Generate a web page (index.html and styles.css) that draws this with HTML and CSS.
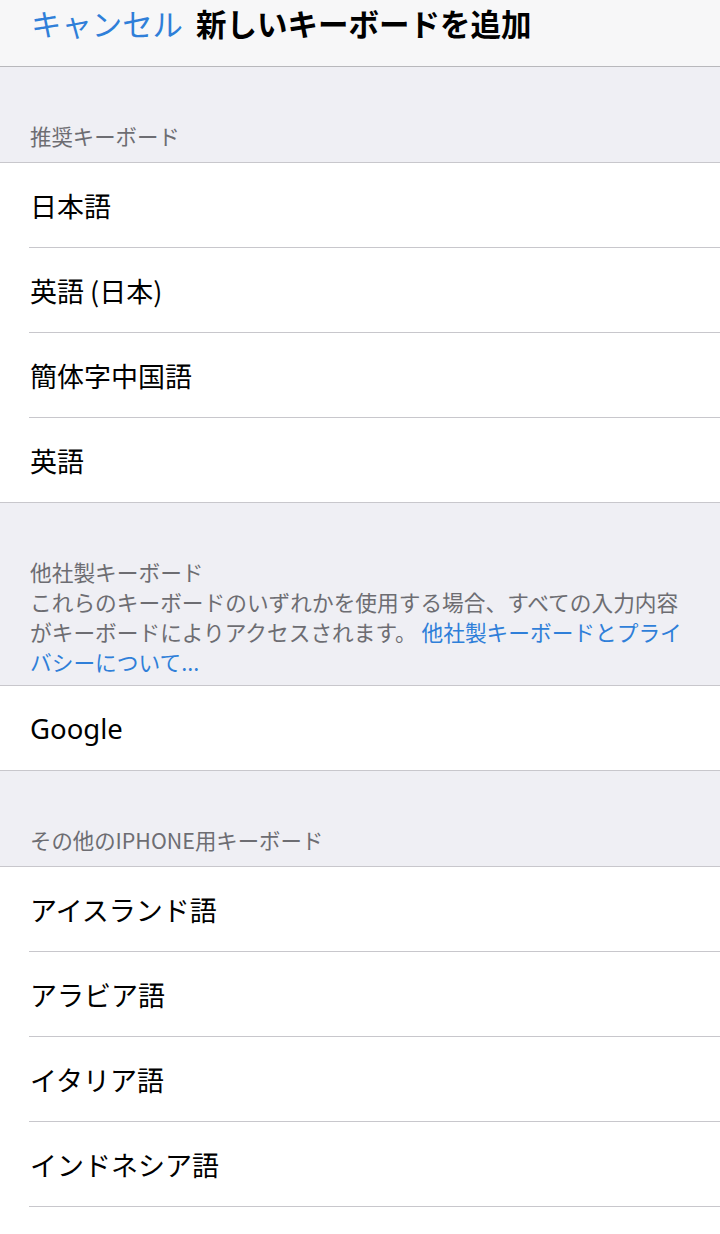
FILE: index.html
```html
<!DOCTYPE html>
<html lang="ja">
<head>
<meta charset="utf-8">
<link rel="stylesheet" href="styles.css">
</head>
<body>
<div class="screen">
  <header class="nav">
    <span class="cancel">キャンセル</span>
    <span class="title">新しいキーボードを追加</span>
  </header>

  <div class="section-head">推奨キーボード</div>
  <ul class="group">
    <li class="row">日本語</li>
    <li class="row">英語 (日本)</li>
    <li class="row">簡体字中国語</li>
    <li class="row">英語</li>
  </ul>

  <div class="section-head multi">他社製キーボード<br>これらのキーボードのいずれかを使用する場合、すべての入力内容がキーボードによりアクセスされます。 <span class="link">他社製キーボードとプライバシーについて...</span></div>
  <ul class="group">
    <li class="row latin">Google</li>
  </ul>

  <div class="section-head">その他のIPHONE用キーボード</div>
  <ul class="group open">
    <li class="row">アイスランド語</li>
    <li class="row">アラビア語</li>
    <li class="row">イタリア語</li>
    <li class="row">インドネシア語</li>
  </ul>
</div>
</body>
</html>
```

FILE: styles.css
```css
html, body {
  margin: 0;
  padding: 0;
  background: #efeff4;
}
body {
  font-family: "Noto Sans CJK JP", "Noto Sans", sans-serif;
  width: 720px;
  height: 1234px;
  overflow: hidden;
}
.screen {
  display: flex;
  flex-direction: column;
  height: 1234px;
}
.nav {
  height: 67px;
  flex: none;
  box-sizing: border-box;
  padding: 6px 0 0 31px;
  background: #f7f7f8;
  border-bottom: 1px solid #b8b8bc;
  display: flex;
  align-items: flex-start;
  gap: 13px;
  line-height: 34px;
  font-size: 30.4px;
}
.cancel {
  color: #2f7fd9;
}
.title {
  color: #000;
  font-weight: 700;
  font-size: 30.5px;
}
.section-head {
  padding: 54px 20px 11px 30px;
  font-size: 21.4px;
  line-height: 30px;
  color: #6d6d72;
}
.section-head.multi {
  padding-bottom: 8px;
  font-size: 21.7px;
  padding-right: 24px;
}
.link {
  color: #2f7fd9;
}
.group {
  list-style: none;
  margin: 0;
  padding: 0 0 0 29px;
  background: #fff;
  border-top: 1px solid #c8c7cc;
  border-bottom: 1px solid #c8c7cc;
}
.group.open {
  border-bottom: none;
  flex: 1;
}
.row {
  height: 84px;
  display: flex;
  align-items: center;
  padding-left: 1px;
  font-size: 27px;
  color: #000;
  border-bottom: 1px solid #c8c7cc;
}
.row:last-child {
  border-bottom: none;
}
.group.open .row:last-child {
  border-bottom: 1px solid #c8c7cc;
}
.row.latin {
  font-family: "Noto Sans", "Roboto", sans-serif;
  font-size: 27.5px;
}
```
